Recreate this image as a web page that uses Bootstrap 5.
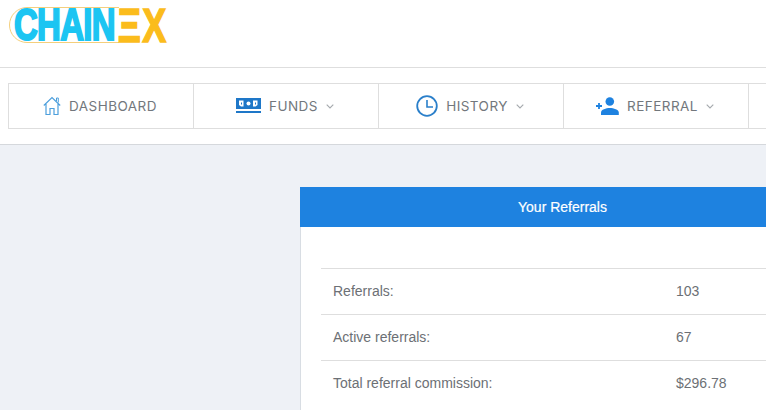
<!DOCTYPE html>
<html lang="en">
<head>
    <meta charset="UTF-8">
    <meta name="viewport" content="width=device-width, initial-scale=1.0">
    <title>Chainex - Your Referrals</title>
    <link href="https://cdn.jsdelivr.net/npm/bootstrap@5.3.0/dist/css/bootstrap.min.css" rel="stylesheet">
    <style>
        html, body {
            height: 100%;
            overflow: hidden;
        }
        body {
            background-color: #eef1f6;
            font-family: "Liberation Sans", Arial, sans-serif;
            color: #6c7075;
        }
        .site-top {
            background-color: #fff;
            height: 145px;
            border-bottom: 1px solid #d5d8dc;
        }
        .logo-bar {
            height: 68px;
            border-bottom: 1px solid #dedede;
        }
        .logo-bar svg {
            display: block;
        }
        .logo-word {
            font-family: "Liberation Sans", sans-serif;
            font-weight: 700;
        }
        .logo-blue {
            font-size: 44px;
            letter-spacing: -1px;
            fill: #1cc5f2;
            stroke: #1cc5f2;
            stroke-width: 2px;
        }
        .logo-gold {
            font-size: 48px;
            letter-spacing: 2px;
            fill: #fbbc1c;
            stroke: #fbbc1c;
            stroke-width: 1.5px;
        }
        .menu-strip {
            margin: 15px 0 0 8px;
            height: 46px;
            border: 1px solid #dedede;
            border-right: 0;
        }
        .menu-item {
            flex: 0 0 185px;
            padding-right: 2px;
            border-right: 1px solid #dedede;
            font-family: Inter, "Liberation Sans", sans-serif;
            font-size: 13.5px;
            letter-spacing: .45px;
            color: #72777c;
            text-decoration: none;
        }
        .page-body {
            padding: 42px 0 0 300px;
        }
        .ref-panel {
            flex: 0 0 525px;
            background-color: #fff;
            border-left: 1px solid #d8dde3;
            height: 223px;
        }
        .ref-head {
            background-color: #1e82e0;
            color: #fff;
            height: 40px;
            margin-left: -1px;
            font-size: 14px;
            -webkit-text-stroke: .2px #fff;
        }
        .ref-rows {
            padding: 41px 0 0 20px;
        }
        .ref-row {
            height: 46px;
            border-top: 1px solid #dedede;
            font-size: 14px;
            padding-left: 12px;
        }
        .ref-label {
            flex: 0 0 343px;
        }
    </style>
</head>
<body>
<header class="site-top">
    <div class="logo-bar">
        <svg width="260" height="60" viewBox="0 0 260 60">
            <path d="M119 7.500H27a17.500 17.500 0 0 0 0 35h92" fill="#fff" stroke="#f4cf7c" stroke-width="1"/>
            <text class="logo-word" transform="translate(14 40) scale(.75 1)"><tspan class="logo-blue">CHAIN</tspan><tspan class="logo-gold" dx="4" dy="2">ΞX</tspan></text>
        </svg>
    </div>
    <nav class="menu-strip d-flex">
        <a class="menu-item d-flex align-items-center justify-content-center gap-2" href="#">
            <svg width="18" height="20" viewBox="0 0 18 20" fill="none" stroke="#4d9fdc" stroke-width="1.2">
                <path d="M.8 9.500 9 1.500l8.200 8M3 8v10.500h4v-6h4v6h4V8"/>
                <path d="M13.500 5V2h1.800v4.500" stroke-width="1"/>
            </svg>
            <span>DASHBOARD</span>
        </a>
        <a class="menu-item d-flex align-items-center justify-content-center gap-2" href="#">
            <svg width="25" height="16" viewBox="0 0 25 16">
                <rect width="25" height="11" fill="#1e77c8"/>
                <rect y="13" width="25" height="2" fill="#1e77c8"/>
                <path d="M3 2.500h4.500v6H5L3 7zM21.500 2.500H17v6h2.500l2-1.500z" fill="#fff"/>
                <path d="M5 4.500h1v2H5zM19 4.500h1v2h-1z" fill="#1e77c8"/>
                <circle cx="12.500" cy="5.500" r="2" fill="#fff"/>
            </svg>
            <span>FUNDS</span>
            <svg width="8" height="5" viewBox="0 0 8 5" fill="none" stroke="#a5a9ad" stroke-width="1.100"><path d="m.7.700 3.300 3.300L7.300.700"/></svg>
        </a>
        <a class="menu-item d-flex align-items-center justify-content-center gap-2" href="#">
            <svg width="22" height="22" viewBox="0 0 22 22" fill="none" stroke="#2a7fca" stroke-width="1.800">
                <circle cx="11" cy="11" r="9.800"/>
                <path d="M11 5v7h6" stroke-width="1.600"/>
            </svg>
            <span>HISTORY</span>
            <svg width="8" height="5" viewBox="0 0 8 5" fill="none" stroke="#a5a9ad" stroke-width="1.100"><path d="m.7.700 3.300 3.300L7.300.700"/></svg>
        </a>
        <a class="menu-item d-flex align-items-center justify-content-center gap-2" href="#">
            <svg width="23" height="18" viewBox="0 0 23 18" fill="#1e82e0">
                <circle cx="13.800" cy="4.500" r="4.300"/>
                <path d="M5 18v-2.500C5 12.500 10 11 13.800 11s9 1.500 9 4.500V18z"/>
                <path d="M3 6v6M0 9h6" stroke="#1e82e0" stroke-width="1.800"/>
            </svg>
            <span>REFERRAL</span>
            <svg width="8" height="5" viewBox="0 0 8 5" fill="none" stroke="#a5a9ad" stroke-width="1.100"><path d="m.7.700 3.300 3.300L7.300.700"/></svg>
        </a>
    </nav>
</header>
<main class="page-body d-flex">
    <section class="ref-panel">
        <div class="ref-head d-flex align-items-center justify-content-center">Your Referrals</div>
        <div class="ref-rows">
            <div class="ref-row d-flex align-items-center"><span class="ref-label">Referrals:</span><span>103</span></div>
            <div class="ref-row d-flex align-items-center"><span class="ref-label">Active referrals:</span><span>67</span></div>
            <div class="ref-row d-flex align-items-center"><span class="ref-label">Total referral commission:</span><span>$296.78</span></div>
        </div>
    </section>
</main>
<script src="https://cdn.jsdelivr.net/npm/bootstrap@5.3.0/dist/js/bootstrap.bundle.min.js"></script>
</body>
</html>
